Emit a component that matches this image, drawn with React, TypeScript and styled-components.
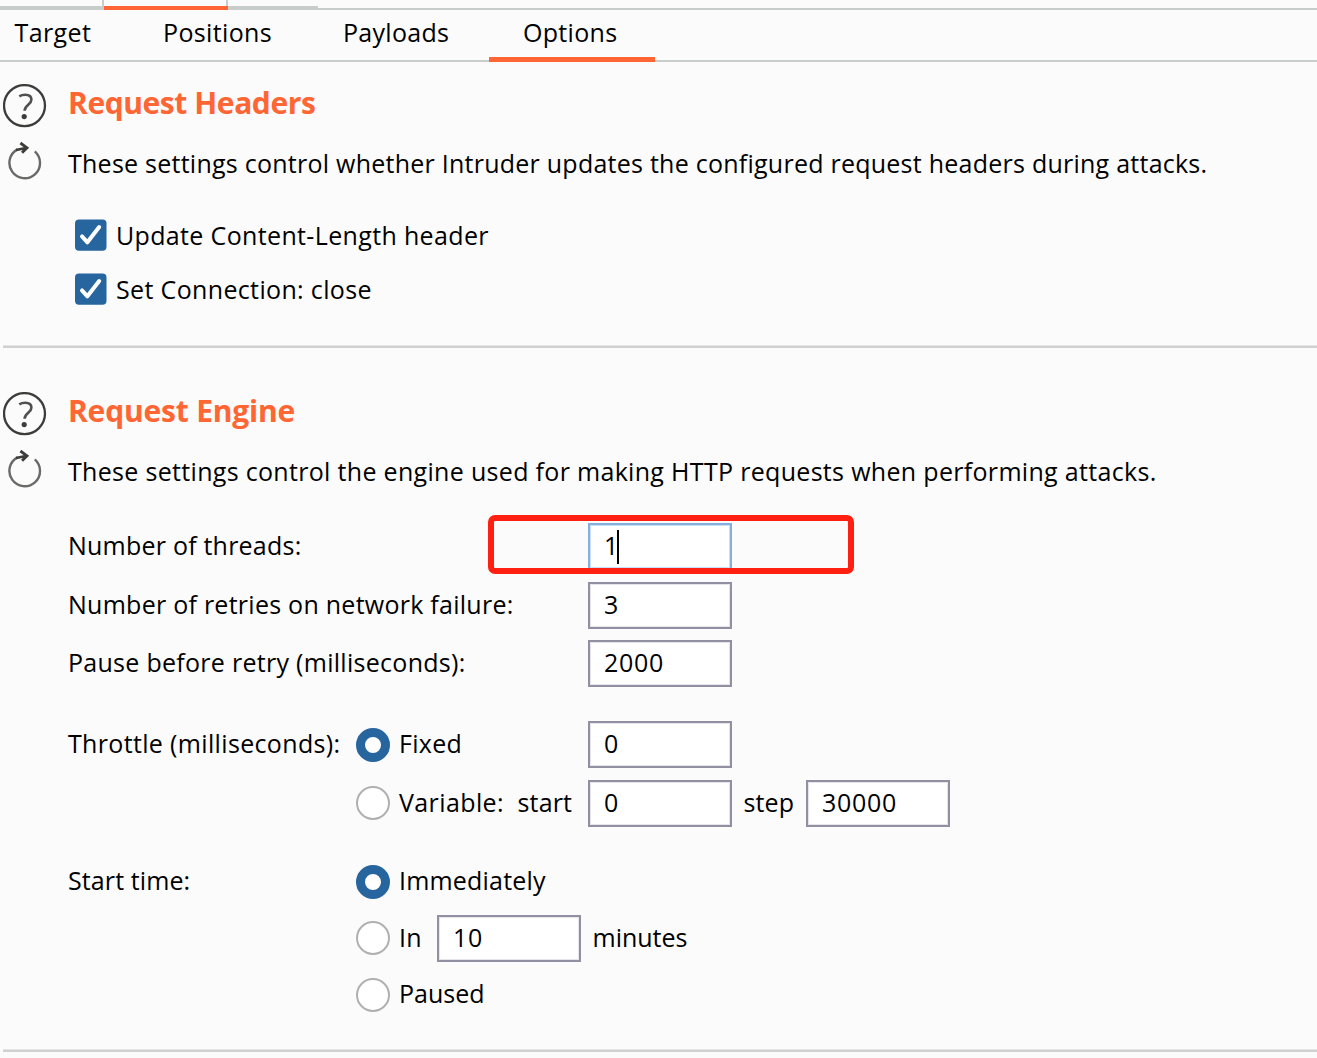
import React from "react";
import styled, { createGlobalStyle, css } from "styled-components";

const GlobalStyle = createGlobalStyle`
  * { box-sizing: border-box; }
  html, body { margin: 0; padding: 0; background: #fbfbfb; overflow: hidden; }
  body { font-family: "Open Sans", "Noto Sans", sans-serif; color: #000; }
`;

const Page = styled.main`
  width: 1317px;
  height: 1058px;
  overflow: hidden;
  background: #fbfbfb;
`;

const UpperTabs = styled.div`
  display: flex;
  align-items: flex-end;
  height: 10px;
  background: linear-gradient(#c8cdcc, #c8cdcc) 0 8px / 100% 2px no-repeat;
`;

const UpperTab = styled.div<{ $width: number; $active?: boolean }>`
  width: ${(p) => p.$width}px;
  height: 10px;
  border-bottom: 4px solid ${(p) => (p.$active ? "#ff6633" : "#c8cdcc")};
`;

const UpperDivider = styled.div<{ $overlap?: boolean }>`
  width: 2px;
  height: 6px;
  margin-left: ${(p) => (p.$overlap ? "-2px" : "0")};
  margin-bottom: 4px;
  background: #c8cdcc;
  box-shadow: ${(p) => (p.$overlap ? "none" : "0 4px 0 #c8cdcc")};
`;

const TabBar = styled.nav`
  display: flex;
  height: 52px;
  background: linear-gradient(#c8cdcc, #c8cdcc) 0 50px / 100% 2px no-repeat;
`;

const Text = styled.span<{ $spacing?: number }>`
  font-size: 25px;
  line-height: 32px;
  letter-spacing: ${(p) => p.$spacing ?? 0.36}px;
  white-space: nowrap;
`;

const Tab = styled.div<{ $width: number; $indent: number; $active?: boolean }>`
  width: ${(p) => p.$width}px;
  height: 52px;
  padding: 6px 0 0 ${(p) => p.$indent}px;
  border-bottom: ${(p) => (p.$active ? "5px solid #ff6633" : "none")};
`;

const Section = styled.section`
  display: grid;
  grid-template-columns: 68px 1fr;
`;

const IconColumn = styled.div`
  display: flex;
  flex-direction: column;
  gap: 11px;
  padding: 22px 0 0 3px;

  svg { display: block; flex: none; }
`;

const Body = styled.div`
  display: flex;
  flex-direction: column;
  padding-top: 21px;
`;

const Heading = styled.h2<{ $spacing: number }>`
  margin: 0 0 24px;
  font-size: 30px;
  font-weight: 700;
  line-height: 40px;
  letter-spacing: ${(p) => p.$spacing}px;
  color: #ff6633;
  white-space: nowrap;
`;

const CheckList = styled.div`
  display: flex;
  flex-direction: column;
  gap: 22px;
  padding: 40px 0 0 7px;
`;

const CheckRow = styled.label`
  display: flex;
  gap: 9px;
  height: 32px;
`;

const CheckBox = styled.span`
  display: flex;
  width: 32px;
  height: 32px;
`;

const Divider = styled.hr<{ $top: number; $bottom: number }>`
  height: 3px;
  margin: ${(p) => p.$top}px 0 ${(p) => p.$bottom}px 3px;
  border: 0;
  border-top: 1px solid #e4e4e4;
  background: #d0d0d0;
`;

const Row = styled.div<{ $gap: number }>`
  position: relative;
  display: flex;
  height: 47px;
  margin-top: ${(p) => p.$gap}px;

  ${Text} { padding-top: 6px; }
`;

const Cell = styled.div<{ $width: number }>`
  display: flex;
  flex: none;
  width: ${(p) => p.$width}px;
`;

const Suffix = styled.div<{ $width?: number }>`
  display: flex;
  width: ${(p) => (p.$width ? `${p.$width}px` : "auto")};
  padding-left: 11.5px;
`;

const Field = styled.div<{ $focused?: boolean }>`
  display: flex;
  flex: none;
  width: 144px;
  height: 47px;
  padding: 0 0 0 14px;
  border: 2px solid #918fa2;
  background: #fff;
  box-shadow: inset 0 0 0 1px #e6e5ec;

  ${(p) => p.$focused && css`
    border-color: #87afdc;
    box-shadow: inset 0 0 0 1px #c9dff5;
  `}

  ${Text} { padding-top: 4px; }
`;

const Caret = styled.span`
  width: 2px;
  height: 34px;
  margin: 5px 0 0 -2px;
  background: #000;
`;

const Radio = styled.span<{ $checked?: boolean; $top?: number }>`
  flex: none;
  width: 34px;
  height: 34px;
  margin: ${(p) => p.$top ?? 7}px 9px 0 0;
  border: ${(p) => (p.$checked ? "9px solid #27659f" : "2px solid #b0b0b0")};
  border-radius: 50%;
  background: #fff;
`;

const Highlight = styled.div`
  position: absolute;
  left: 419.5px;
  top: -8.5px;
  width: 366px;
  height: 59px;
  border: 6px solid #ff2012;
  border-radius: 7px;
`;

function HelpIcon() {
  return (
    <svg width="44" height="44" viewBox="0 0 44 44" fill="none" stroke="#3c3c3a">
      <circle cx="21.5" cy="21.6" r="20.5" strokeWidth="2.3" />
      <path d="M16.3 12.4C18.2 11.2 20 10.8 22.2 10.8c4 0 6.2 1.9 6.2 5 0 4.7-6.8 5.2-6.8 10.9" strokeWidth="2.6" stroke="#50504e" />
      <circle cx="21.2" cy="32.6" r="2.6" fill="#3c3c3a" stroke="none" />
    </svg>
  );
}

function ResetIcon() {
  return (
    <svg width="44" height="41" viewBox="0 0 44 41" fill="none" stroke="#3c3c3a">
      <path d="M31.8 12.4A15.3 15.3 0 1 1 14.5 10.4" stroke="#6a6a69" strokeWidth="2.4" />
      <path d="M13 11L23 9M17.4 4L24 8.8L19 13.8" strokeWidth="2.8" />
    </svg>
  );
}

function SectionIcons() {
  return (
    <IconColumn>
      <HelpIcon />
      <ResetIcon />
    </IconColumn>
  );
}

function CheckMark() {
  return (
    <svg width="32" height="32" viewBox="0 0 32 32" fill="none">
      <rect y="0.4" width="31.5" height="31.4" rx="4" fill="#27659f" />
      <path d="M7 17.4L12.4 23.3L24.2 8" stroke="#fff" strokeWidth="4" strokeLinecap="round" strokeLinejoin="round" />
    </svg>
  );
}

function Check({ label, spacing }: { label: string; spacing: number }) {
  return (
    <CheckRow>
      <CheckBox><CheckMark /></CheckBox>
      <Text $spacing={spacing}>{label}</Text>
    </CheckRow>
  );
}

function NumberField({ value, focused }: { value: string; focused?: boolean }) {
  return (
    <Field $focused={focused}>
      <Text $spacing={0.7}>{value}</Text>
      {focused && <Caret />}
    </Field>
  );
}

export default function App() {
  return (
    <Page>
      <GlobalStyle />
      <UpperTabs>
        <UpperTab $width={102} />
        <UpperDivider />
        <UpperTab $width={124} $active />
        <UpperDivider $overlap />
        <UpperTab $width={90} />
      </UpperTabs>
      <TabBar>
        <Tab $width={129} $indent={14.5}><Text $spacing={0.4}>Target</Text></Tab>
        <Tab $width={180} $indent={34}><Text $spacing={0.36}>Positions</Text></Tab>
        <Tab $width={180} $indent={34}><Text $spacing={0.3}>Payloads</Text></Tab>
        <Tab $width={166} $indent={34} $active><Text $spacing={0.3}>Options</Text></Tab>
      </TabBar>

      <Section>
        <SectionIcons />
        <Body>
          <Heading $spacing={-0.42}>Request Headers</Heading>
          <Text $spacing={0.248}>These settings control whether Intruder updates the configured request headers during attacks.</Text>
          <CheckList>
            <Check label="Update Content-Length header" spacing={0.35} />
            <Check label="Set Connection: close" spacing={0.35} />
          </CheckList>
        </Body>
      </Section>

      <Divider $top={40} $bottom={22} />

      <Section>
        <SectionIcons />
        <Body>
          <Heading $spacing={-0.19}>Request Engine</Heading>
          <Text $spacing={0.315}>These settings control the engine used for making HTTP requests when performing attacks.</Text>

          <Row $gap={36}>
            <Cell $width={520}><Text $spacing={0.22}>Number of threads:</Text></Cell>
            <NumberField value="1" focused />
            <Highlight />
          </Row>
          <Row $gap={12}>
            <Cell $width={520}><Text $spacing={0.26}>Number of retries on network failure:</Text></Cell>
            <NumberField value="3" />
          </Row>
          <Row $gap={11}>
            <Cell $width={520}><Text $spacing={0.285}>Pause before retry (milliseconds):</Text></Cell>
            <NumberField value="2000" />
          </Row>

          <Row $gap={34}>
            <Cell $width={288}><Text $spacing={0.34}>Throttle (milliseconds):</Text></Cell>
            <Cell $width={232}><Radio $checked /><Text $spacing={0.3}>Fixed</Text></Cell>
            <NumberField value="0" />
          </Row>
          <Row $gap={12}>
            <Cell $width={288} />
            <Cell $width={161.5}><Radio $top={6} /><Text $spacing={0.4}>Variable:</Text></Cell>
            <Cell $width={70.5}><Text $spacing={0.15}>start</Text></Cell>
            <NumberField value="0" />
            <Suffix $width={74}><Text $spacing={0.1}>step</Text></Suffix>
            <NumberField value="30000" />
          </Row>

          <Row $gap={31}>
            <Cell $width={288}><Text $spacing={0.1}>Start time:</Text></Cell>
            <Radio $checked /><Text $spacing={0.2}>Immediately</Text>
          </Row>
          <Row $gap={10}>
            <Cell $width={288} />
            <Cell $width={81}><Radio $top={6} /><Text $spacing={0.3}>In</Text></Cell>
            <NumberField value="10" />
            <Suffix><Text $spacing={0}>minutes</Text></Suffix>
          </Row>
          <Row $gap={9}>
            <Cell $width={288} />
            <Radio /><Text $spacing={0}>Paused</Text>
          </Row>
        </Body>
      </Section>

      <Divider $top={31} $bottom={0} />
    </Page>
  );
}
